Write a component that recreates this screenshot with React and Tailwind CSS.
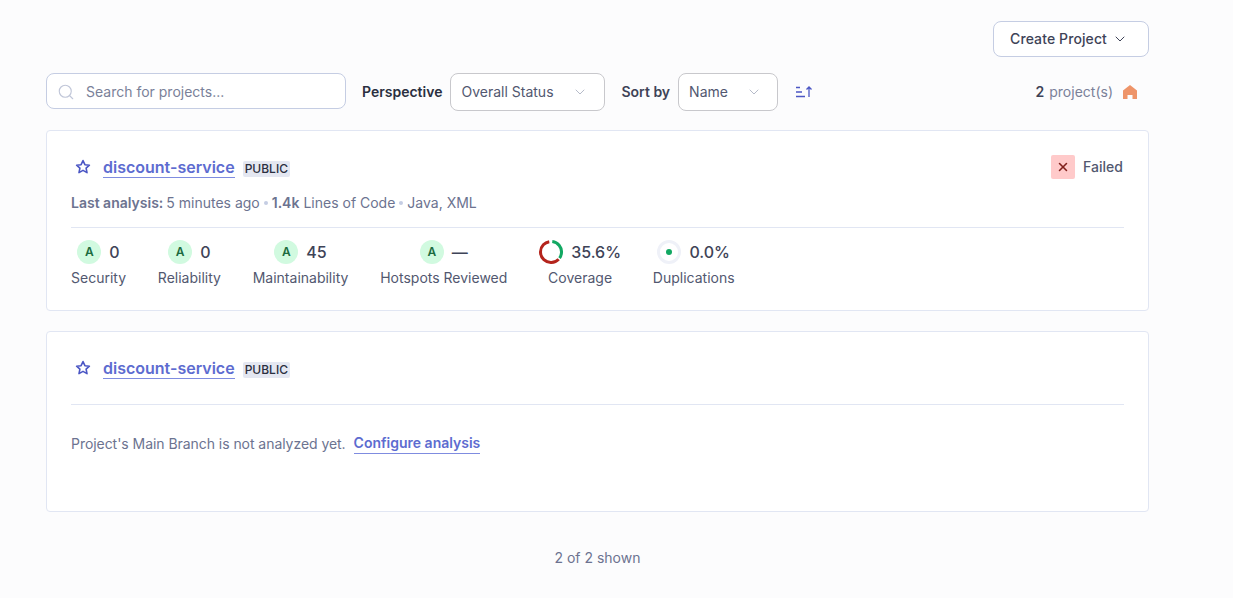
import React from 'react';
import { Search, ChevronDown, X } from 'lucide-react';

const Star = () => (
  <svg width="16" height="16" viewBox="0 0 16 16" fill="none" stroke="#4b56c4" strokeWidth="1.6" strokeLinejoin="round">
    <path d="M8 1.6l1.9 4.1 4.5.5-3.3 3 .9 4.4L8 11.4l-4 2.2.9-4.4-3.3-3 4.5-.5z" />
  </svg>
);

const Grade = () => (
  <span className="w-6 h-6 rounded-full bg-[#d1fae0] text-[#1b6b3f] text-xs font-semibold flex items-center justify-center">A</span>
);

const Metric = ({ icon, value, label }) => (
  <div className="flex flex-col items-center">
    <div className="h-6 flex items-center gap-2">
      {icon}
      <span className="text-base font-medium text-[#3e4357]">{value}</span>
    </div>
    <span className="mt-1 text-sm leading-5 text-[#525870]">{label}</span>
  </div>
);

const CoverageRing = () => (
  <svg width="24" height="24" viewBox="0 0 24 24" fill="none" strokeWidth="3">
    <circle cx="12" cy="12" r="10.5" stroke="#b4231c" strokeDasharray="39.6 26.4" transform="rotate(43 12 12)" />
    <circle cx="12" cy="12" r="10.5" stroke="#12a862" strokeDasharray="21.6 44.4" transform="rotate(-83 12 12)" />
  </svg>
);

const DuplicationRing = () => (
  <svg width="24" height="24" viewBox="0 0 24 24" fill="none">
    <circle cx="12" cy="12" r="10.5" stroke="#eff1f8" strokeWidth="3" />
    <circle cx="12" cy="12" r="3" fill="#12a862" />
  </svg>
);

const ProjectTitle = () => (
  <div className="h-6 flex items-center">
    <span className="ml-1"><Star /></span>
    <a className="ml-3 text-base leading-5 font-semibold text-[#5d6cd0] border-b border-[#7f8ce0]">discount-service</a>
    <span className="ml-2 mt-1 px-[2px] h-4 rounded-[2px] bg-[#e4e7f1] text-xs leading-4 font-medium text-[#2a2f40]">PUBLIC</span>
  </div>
);

function App() {
  return (
    <div className="min-h-[598px] bg-[#fcfcfd] text-sm font-['Inter',sans-serif] pt-[21px] pl-[46px] pr-[84px]">
      <div className="flex justify-end">
        <button className="w-[156px] h-9 pr-1 rounded-lg border border-[#c5cde3] bg-white text-sm font-medium tracking-[0.1px] text-[#3e4357] flex items-center justify-center gap-[5px]">
          Create Project
          <ChevronDown size={16} strokeWidth={1.5} />
        </button>
      </div>

      <div className="mt-4 flex items-start">
        <div className="w-[300px] h-9 pt-px rounded-lg border border-[#c5cde3] bg-white flex items-center pl-[10px]">
          <Search size={18} strokeWidth={1.5} className="text-[#c0c6d8]" />
          <span className="ml-[11px] text-[#7a8199]">Search for projects...</span>
        </div>
        <span className="ml-4 h-[38px] flex items-center font-semibold text-[#2a2f40]">Perspective</span>
        <div className="ml-2 w-[155px] h-[38px] rounded-lg border border-[#c8c8cc] bg-white flex items-center justify-between pl-[10px] pr-4 text-[#525870]">
          Overall Status
          <ChevronDown size={16} strokeWidth={1.5} className="text-[#b6bbc9]" />
        </div>
        <span className="ml-4 h-[38px] flex items-center font-semibold text-[#3e4357]">Sort by</span>
        <div className="ml-2 w-[100px] h-[38px] rounded-lg border border-[#c8c8cc] bg-white flex items-center justify-between pl-[10px] pr-[15px] text-[#525870]">
          Name
          <ChevronDown size={16} strokeWidth={1.5} className="text-[#b6bbc9]" />
        </div>
        <span className="ml-[17px] h-[38px] flex items-center">
          <svg width="18" height="14" viewBox="0 0 18 14" fill="none" stroke="#4b56c4" strokeWidth="1.3">
            <path d="M1 2.5h4M1 7h6M1 11.5h9" />
            <path d="M14 12V2M11.5 4.5L14 2l2.5 2.5" />
          </svg>
        </span>
        <div className="ml-auto h-[38px] flex items-center pr-[11px]">
          <span className="font-semibold text-[#3e4357]">2</span>
          <span className="ml-[5px] text-[#7a8199]">project(s)</span>
          <svg className="ml-[9px]" width="16" height="16" viewBox="0 0 16 16" fill="#ee9469">
            <path d="M8 1l7 5.5V15h-4.5v-4h-5v4H1V6.5z" />
          </svg>
        </div>
      </div>

      <div className="mt-[19px] h-[181px] rounded-[4px] border border-[#e1e6f3] bg-white px-6 pt-6">
        <div className="flex items-center justify-between">
          <ProjectTitle />
          <div className="flex items-center gap-2">
            <span className="w-6 h-6 rounded-[2px] bg-[#ffcaca] flex items-center justify-center">
              <X size={14} strokeWidth={2.6} className="text-[#80211c]" />
            </span>
            <span className="w-[41px] font-medium text-[#525870]">Failed</span>
          </div>
        </div>
        <div className="mt-[14px] flex items-center text-[#6c7390] h-5">
          <span className="font-semibold">Last analysis:</span>
          <span className="ml-[3px]">5 minutes ago</span>
          <span className="mx-1 w-1 h-1 rounded-full bg-[#c5cde3]"></span>
          <span className="font-semibold">1.4k</span>
          <span className="ml-1">Lines of Code</span>
          <span className="mx-1 w-1 h-1 rounded-full bg-[#c5cde3]"></span>
          <span>Java, XML</span>
        </div>
        <div className="mt-[14px] border-t border-[#e1e6f3] pt-3 flex gap-[31.8px]">
          <Metric icon={<Grade />} value="0" label="Security" />
          <Metric icon={<Grade />} value="0" label="Reliability" />
          <Metric icon={<Grade />} value="45" label="Maintainability" />
          <Metric icon={<Grade />} value="—" label="Hotspots Reviewed" />
          <Metric icon={<CoverageRing />} value="35.6%" label="Coverage" />
          <Metric icon={<DuplicationRing />} value="0.0%" label="Duplications" />
        </div>
      </div>

      <div className="mt-5 h-[181px] rounded-[4px] border border-[#e1e6f3] bg-white px-6 pt-6">
        <ProjectTitle />
        <div className="mt-6 border-t border-[#e1e6f3] pt-[28px] flex items-center text-[#6c7390]">
          <span className="tracking-[-0.05px]">Project's Main Branch is not analyzed yet.</span>
          <a className="ml-2 font-semibold text-[#5d6cd0] border-b border-[#7f8ce0]">Configure analysis</a>
        </div>
      </div>

      <div className="mt-[36px] text-center text-[#6c7390]">2 of 2 shown</div>
    </div>
  );
}

export default App;
